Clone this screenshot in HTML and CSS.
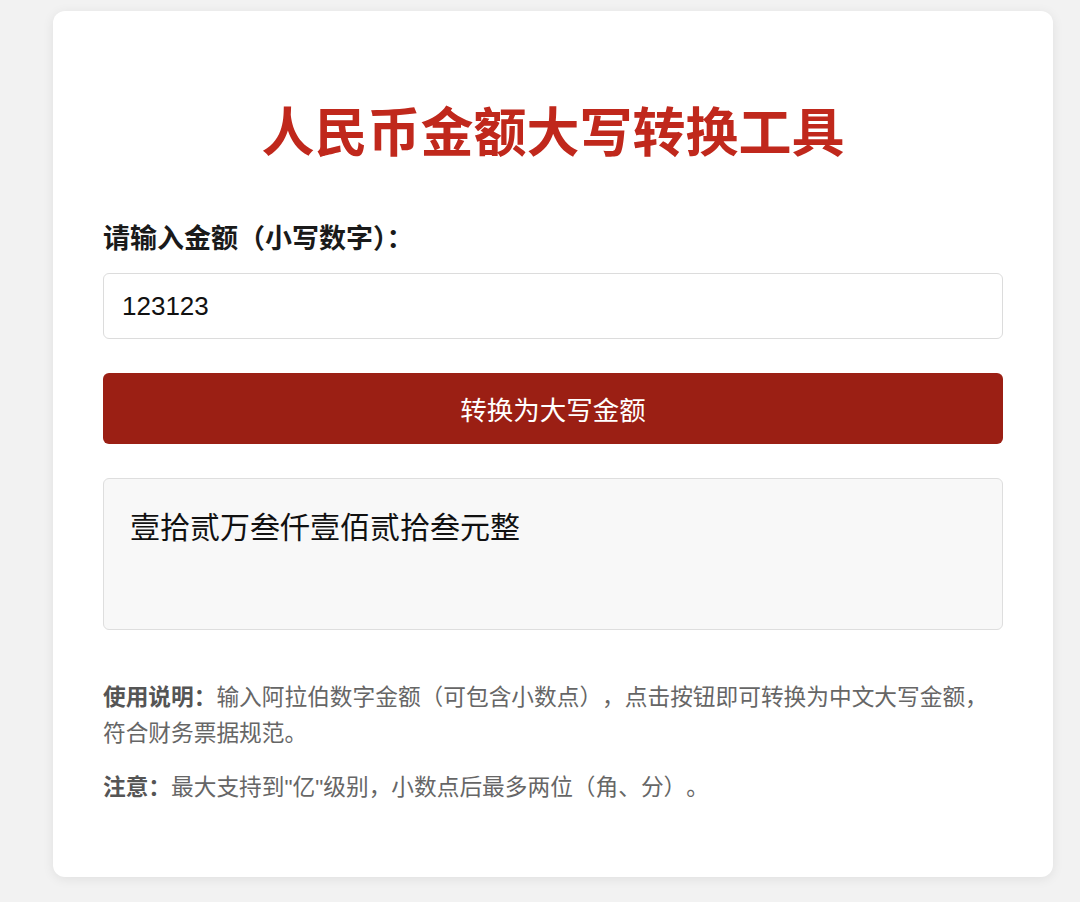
FILE: index.html
```html
<!DOCTYPE html>
<html lang="zh-CN">
<head>
    <meta charset="UTF-8">
    <meta name="viewport" content="width=device-width, initial-scale=1.0">
    <title>人民币金额大写转换工具</title>
    <link rel="stylesheet" href="styles.css">
</head>
<body>
    <div class="card">
        <h1>人民币金额大写转换工具</h1>
        <div class="form-group">
            <label for="amount">请输入金额（小写数字）：</label>
            <input type="text" id="amount" value="123123">
        </div>
        <button>转换为大写金额</button>
        <div class="result">壹拾贰万叁仟壹佰贰拾叁元整</div>
        <div class="notes">
            <p><strong>使用说明：</strong>输入阿拉伯数字金额（可包含小数点），点击按钮即可转换为中文大写金额，符合财务票据规范。</p>
            <p><strong>注意：</strong>最大支持到"亿"级别，小数点后最多两位（角、分）。</p>
        </div>
    </div>
</body>
</html>
```

FILE: styles.css
```css
body { font-family: "Liberation Sans", "Noto Sans CJK SC", sans-serif; background-color: #f2f2f2; margin: 0; padding: 11px 27px 25px 53px; }
.card { background-color: #ffffff; padding: 50px; border-radius: 12px; box-shadow: 0 2px 12px rgba(0, 0, 0, 0.08); height: 866px; box-sizing: border-box; }
h1 { color: #c0281c; font-size: 53px; line-height: 58px; font-weight: 700; text-align: center; margin: 44px 0 57px; }
.form-group { margin-bottom: 34px; }
label { display: block; font-size: 27px; line-height: 39px; font-weight: 700; color: #1a1a1a; margin-bottom: 14px; }
input[type="text"] {
    width: 100%; height: 66px; padding: 0 18px; border: 1px solid #dcdcdc; border-radius: 6px;
    font-family: "Liberation Sans", sans-serif; font-size: 26px; color: #111; box-sizing: border-box; outline: none;
}
button {
    display: block; width: 100%; height: 71px; background-color: #9b1f14; color: #ffffff; border: none; border-radius: 6px;
    font-family: "Liberation Sans", "Noto Sans CJK SC", sans-serif; font-size: 26.5px; cursor: pointer;
}
.result {
    margin-top: 34px; min-height: 152px; box-sizing: border-box; padding: 26px 26px; background-color: #f8f8f8;
    border: 1px solid #dedede; border-radius: 6px; font-size: 30px; line-height: 45px; color: #111;
}
.notes { margin-top: 49px; color: #666; font-size: 22.7px; line-height: 36px; text-spacing-trim: space-all; }
.notes p { margin: 0 0 18px; }
.notes strong { color: #555; }
```
